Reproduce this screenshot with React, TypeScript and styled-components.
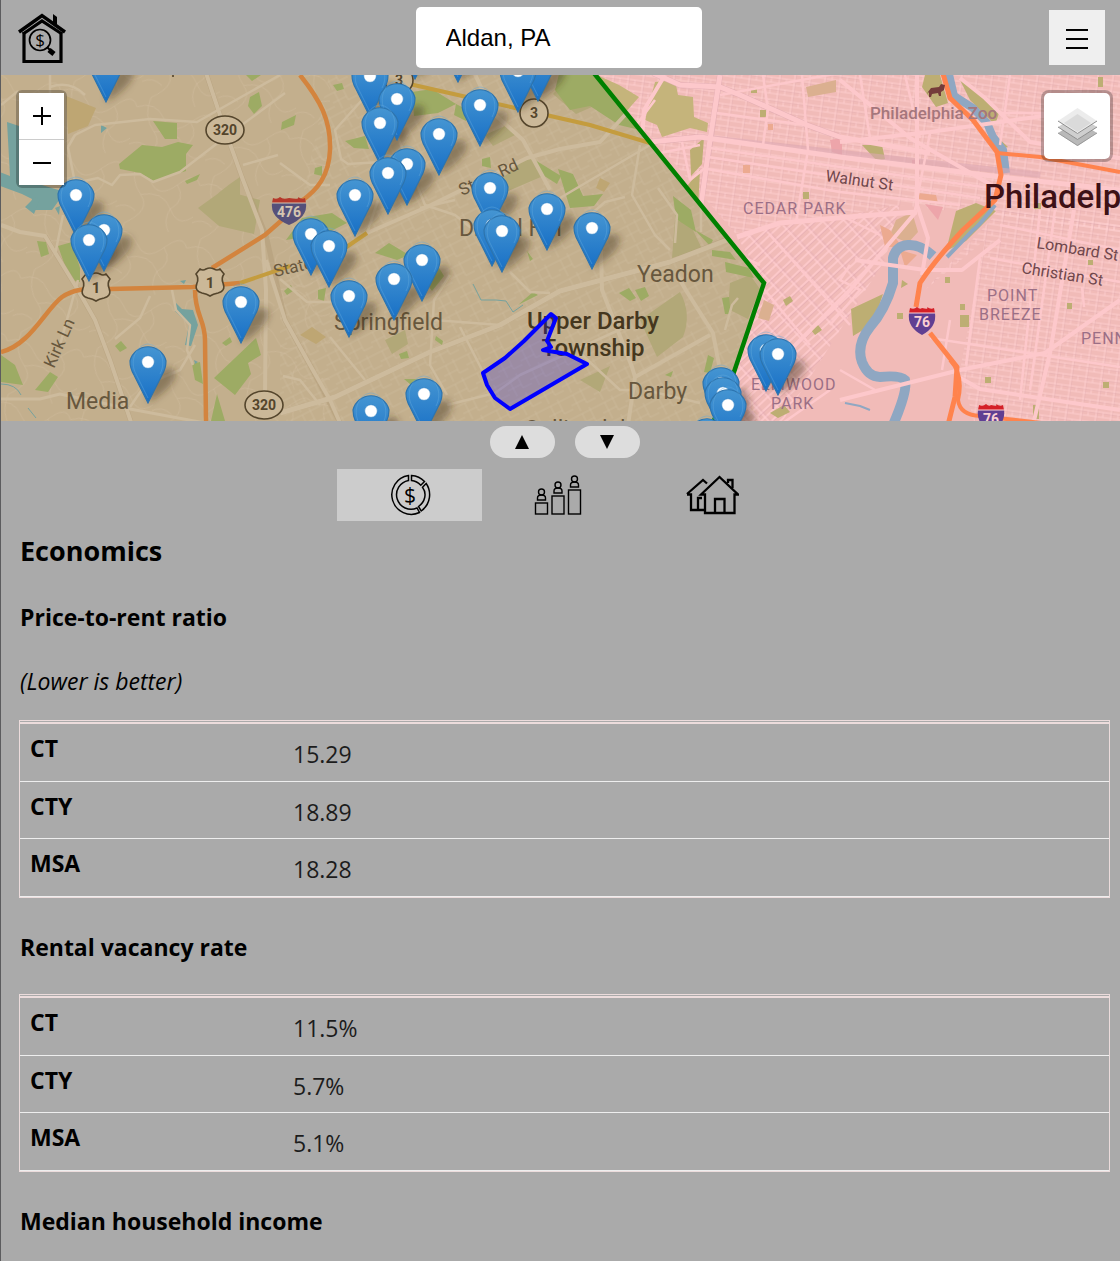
import React, { useState } from "react";
import styled, { createGlobalStyle } from "styled-components";

const GlobalStyle = createGlobalStyle`
  * { box-sizing: border-box; }
  body {
    margin: 0;
    background: #aaa;
    color: #000;
    font-family: "Segoe UI", "Open Sans", "Noto Sans", sans-serif;
  }
`;

const Page = styled.div`
  min-height: 100vh;
  border-left: 1px solid #5c5c5e;
  background: #aaa;
`;

const Header = styled.header`
  display: grid;
  grid-template-columns: 1fr auto 1fr;
  align-items: center;
  height: 75px;
  padding: 0 15px 0 11px;
`;

const LogoLink = styled.a`
  display: block;
  justify-self: start;
  width: 60px;
  height: 54px;
  color: #000;
`;

const SearchInput = styled.input`
  width: 286px;
  height: 61px;
  padding: 0 30px;
  border: 0;
  border-radius: 5px;
  background: #fff;
  color: #000;
  font: 24px "Liberation Sans", Arial, sans-serif;
`;

const MenuButton = styled.button`
  display: flex;
  align-items: center;
  justify-content: center;
  justify-self: end;
  width: 56px;
  height: 55px;
  padding: 0;
  border: 0;
  background: #efefef;
`;

const MapArea = styled.section`
  position: relative;
  height: 346px;
  overflow: hidden;
  background: #c3af8d;
`;

const MapCanvas = styled.svg`
  display: block;
  width: 100%;
  height: 100%;
  font-family: Roboto, "Liberation Sans", sans-serif;
`;

const ZoomControl = styled.div`
  position: absolute;
  top: 15px;
  left: 15px;
  display: flex;
  flex-direction: column;
  border: 3px solid rgba(0, 0, 0, 0.25);
  border-radius: 6px;
  background-clip: padding-box;
`;

const ZoomButton = styled.button`
  display: flex;
  align-items: center;
  justify-content: center;
  width: 45px;
  height: 46px;
  padding: 0;
  border: 0;
  background: #fff;
  & + & {
    border-top: 1px solid #ccc;
  }
`;

const LayersButton = styled.button`
  position: absolute;
  top: 15px;
  right: 7px;
  display: flex;
  align-items: center;
  justify-content: center;
  width: 72px;
  height: 72px;
  padding: 2px 0 0 1px;
  border: 3px solid rgba(0, 0, 0, 0.25);
  border-radius: 8px;
  background: #fff;
  background-clip: padding-box;
`;

const PanelButtons = styled.div`
  display: flex;
  justify-content: center;
  gap: 20px;
  padding: 5px 0 11px 8px;
`;

const PillButton = styled.button`
  display: flex;
  align-items: center;
  justify-content: center;
  width: 65px;
  height: 32px;
  padding: 0;
  border: 0;
  border-radius: 16px;
  background: #ddd;
`;

const Tabs = styled.div`
  display: flex;
  justify-content: center;
  gap: 6px;
`;

const Tab = styled.button<{ $active: boolean }>`
  display: flex;
  align-items: center;
  justify-content: center;
  width: 145px;
  height: 52px;
  padding: 0;
  border: 0;
  background: ${(p) => (p.$active ? "#ccc" : "transparent")};
`;

const Content = styled.main`
  padding: 13px 10px 20px 18px;
`;

const Title = styled.h2`
  margin: 0;
  padding: 0 1px;
  font-size: 27px;
  font-weight: 700;
  line-height: 34px;
`;

const SectionTitle = styled.h3`
  margin: 33px 0 31px;
  padding: 0 1px;
  font-size: 23px;
  font-weight: 700;
  line-height: 32px;
`;

const Note = styled.p`
  margin: 0 0 22px;
  padding: 0 1px;
  font-size: 23px;
  font-style: italic;
  line-height: 34px;
`;

const Table = styled.table`
  width: 100%;
  padding-top: 1px;
  border: 1px solid #ecdcdc;
  border-spacing: 0;
  border-collapse: separate;
  font-size: 23px;
  line-height: 32px;
`;

const RowLabel = styled.th`
  width: 263px;
  padding: 8px 10px 16px;
  border-bottom: 1px solid #eee;
  text-align: left;
  vertical-align: top;
`;

const RowValue = styled.td`
  padding: 14px 10px 10px;
  border-bottom: 1px solid #eee;
  color: #1c1c1c;
  vertical-align: top;
`;

const Row = styled.tr`
  height: 57px;
  &:first-child {
    height: 60px;
  }
  &:last-child {
    height: 58px;
  }
  &:first-child > * {
    border-top: 2px solid #ecdcdc;
  }
`;

/* ---------- icons ---------- */

const LogoIcon = () => (
  <svg width="60" height="54" viewBox="12 10 60 54" fill="none" stroke="#000">
    <path d="M53 22V13l4 3v10z" fill="#000" stroke="none" />
    <path d="M19 31 42 14.500 65 31" strokeWidth="3.400" />
    <path d="M24 31v29.500h37V31" strokeWidth="3.200" />
    <path d="M23 33 42 20l20 13" strokeWidth="3.200" />
    <circle cx="40" cy="39" r="10.500" strokeWidth="1.700" />
    <path d="m47 46 3 3" strokeWidth="2" />
    <path d="m49 49 5 4" strokeWidth="5" />
    <text x="40" y="45" fontSize="17" textAnchor="middle" fill="#000" stroke="none" fontFamily="Open Sans, sans-serif">$</text>
  </svg>
);

const LayersIcon = () => (
  <svg width="42" height="40" viewBox="0 0 42 40">
    <path d="M1 26 20.500 14 40 26 20.500 39z" fill="#b9b9b9" />
    <path d="M1 26 20.500 38.500 40 26" fill="none" stroke="#999" />
    <path d="M1 20 20.500 8 40 20 20.500 33z" fill="#cfcfcf" />
    <path d="M1 20 20.500 32.500 40 20" fill="none" stroke="#8d8d8d" />
    <path d="M1 14 20.500 1 40 14 20.500 27z" fill="#ececec" />
    <path d="M7 16 20.500 7 34 16 20.500 25z" fill="#dadada" />
    <path d="M1 14 20.500 26.500 40 14" fill="none" stroke="#8d8d8d" />
  </svg>
);

const EconomicsIcon = () => (
  <svg width="42" height="42" viewBox="0 0 42 42" fill="none" stroke="#000" strokeWidth="1.500">
    <path d="M19.500 1.500v5A14.500 14.500 0 1 0 28 34l2.500 4.500A19.500 19.500 0 1 1 19.500 1.500z" />
    <path d="M22.500 1.500c5 .3 9.500 2.300 13 6l-3.700 3.700c-2.500-2.600-5.600-4.200-9.300-4.700z" />
    <path d="M37.200 9.500c5.500 8 4.700 20.500-5 27.500l-2.700-4.500c6.500-4.500 8.700-13 4-19.300z" />
    <text x="21" y="28.500" fontSize="21" textAnchor="middle" fill="#000" stroke="none" fontFamily="Open Sans, sans-serif">$</text>
  </svg>
);

const PersonBar = ({ x, top }: { x: number; top: number }) => (
  <g>
    <rect x={x} y={top} width="12" height={40 - top} />
    <circle cx={x + 6} cy={top - 11} r="3" />
    <path d={`M${x + 2} ${top - 3}v-2q0-3 4-3t4 3v2z`} />
  </g>
);

const PeopleIcon = () => (
  <svg width="54" height="42" viewBox="0 0 54 42" fill="none" stroke="#000" strokeWidth="1.400">
    <PersonBar x={1.5} top={29} />
    <PersonBar x={18} top={22} />
    <PersonBar x={34.5} top={16} />
  </svg>
);

const HousesIcon = () => (
  <svg width="54" height="42" viewBox="0 0 54 42" fill="none" stroke="#000" strokeWidth="2.300">
    <path d="m2 20 16-14 4 3.500M2 20.500h4V36h13M13 36V24h4" />
    <path d="M16 20.500 34.500 3 53 20.500H49.500V39H20V20.500z" />
    <path d="M30 39V25h9.500v14M43 9V6h4.500v8" />
  </svg>
);

/* ---------- map ---------- */

const MARKERS: [number, number][] = [
  [415, 79], [458, 82], [538, 101], [106, 102], [518, 112], [370, 117],
  [397, 140], [480, 146], [380, 164], [439, 175], [407, 205], [388, 214],
  [490, 229], [76, 236], [355, 236], [547, 250], [492, 266], [592, 269],
  [104, 271], [502, 272], [311, 275], [89, 281], [329, 287], [422, 301],
  [394, 320], [349, 337], [241, 343], [766, 391], [778, 395], [148, 403],
  [721, 424], [723, 434], [424, 435], [728, 446], [371, 452], [707, 475],
];

const Marker = ({ x, y }: { x: number; y: number }) => (
  <g transform={`translate(${x} ${y})`}>
    <path
      d="M0 0-14-28C-17-33-18-37-18-42A18.500 18.500 0 0 1 18-42C18-37 17-33 14-28Z"
      fill="url(#pin)"
      stroke="#2d74ae"
      strokeWidth="1.200"
    />
    <path d="M0-5-12-29C-19-42-12-58 0-59C12-58 19-42 12-29" fill="none" stroke="#62a8dc" strokeOpacity=".45" />
    <circle cy="-41" r="6.300" fill="#fff" stroke="#2d7fc2" strokeWidth=".6" />
  </g>
);

const StateShield = ({ x, y, rx, label }: { x: number; y: number; rx: number; label: string }) => (
  <g>
    <ellipse cx={x} cy={y} rx={rx} ry="14" fill="#cbb898" stroke="#54452c" strokeWidth="1.600" />
    <text x={x} y={y + 5} fontSize="14" fontWeight="700" textAnchor="middle" fill="#54452c">{label}</text>
  </g>
);

const UsShield = ({ x, y }: { x: number; y: number }) => (
  <g transform={`translate(${x} ${y})`}>
    <path
      d="M-10-13q3 2 6 0 4-2 8 0 3 2 6 0l4 5q-3 4-1 9 3 8-5 10-5 1-8 3-3-2-8-3-8-2-5-10 2-5-1-9z"
      fill="#cbb898"
      stroke="#54452c"
      strokeWidth="1.600"
    />
    <text y="6" fontSize="15" fontWeight="700" textAnchor="middle" fill="#54452c">1</text>
  </g>
);

const Interstate = ({ x, y, w, label, muted }: { x: number; y: number; w: number; label: string; muted?: boolean }) => (
  <g transform={`translate(${x} ${y})`}>
    <path d={`M${-w}-8H${w}Q${w + 2} 6 0 14Q${-w - 2} 6 ${-w}-8z`} fill={muted ? "#55507a" : "#603f92"} />
    <path d={`M${-w}-8l1-5q4 2 7-1 3 3 ${w - 8} 1 ${w - 6} 2 ${w - 8}-1 4 3 7 1l1 5z`} fill={muted ? "#b5382a" : "#d42027"} />
    <path d={`M${-w}-8H${w}`} stroke={muted ? "#d6c6b2" : "#fbd0d2"} />
    <text y="6" fontSize="14" fontWeight="700" textAnchor="middle" fill={muted ? "#d6c6b2" : "#fbd0d2"}>{label}</text>
  </g>
);

const TAN_REGION = "M0 70H593L764 283L733 375L716 425H0Z";
const PINK_REGION = "M593 70H1125V425H716L733 375L764 283Z";

const MapDrawing = () => (
  <MapCanvas viewBox="1 75 1119 346" preserveAspectRatio="xMidYMid slice" role="img" aria-label="Map of Upper Darby and Philadelphia">
    <defs>
      <linearGradient id="pin" x1="0" y1="0" x2="0" y2="1">
        <stop offset="0" stopColor="#4595d2" />
        <stop offset="1" stopColor="#176fc6" />
      </linearGradient>
      <filter id="soft" x="-5%" y="-5%" width="110%" height="110%">
        <feGaussianBlur stdDeviation="3.500" />
      </filter>
      <pattern id="streetsTan" width="25" height="21" patternUnits="userSpaceOnUse" patternTransform="rotate(-27)">
        <path d="M0 3H25M0 12H15M6 3V21M15 0V16M15 16H25" stroke="#cfbc9e" strokeOpacity=".55" fill="none" />
      </pattern>
      <pattern id="suburbs" width="78" height="64" patternUnits="userSpaceOnUse" patternTransform="rotate(12)">
        <path d="M0 12Q18 2 29 18T56 16T78 12M12 0Q8 20 22 33T12 64M22 33Q43 24 54 41T78 44M54 41Q49 54 57 64M56 16Q68 29 54 41M0 50Q10 43 20 50" stroke="#cebb9c" strokeOpacity=".6" fill="none" />
      </pattern>
      <pattern id="streetsPink" width="15" height="11" patternUnits="userSpaceOnUse" patternTransform="rotate(8)">
        <path d="M0 2H15M0 7H15M3 0V11M10 2V7" stroke="#ffd1d2" strokeOpacity=".8" fill="none" />
        <path d="M0 3.500H15M4.500 0V11" stroke="#dfa6ad" strokeOpacity=".4" strokeWidth=".6" fill="none" />
      </pattern>
      <pattern id="streetsDiagonal" width="16" height="13" patternUnits="userSpaceOnUse" patternTransform="rotate(-43)">
        <path d="M0 2H16M0 8H16M3 0V13" stroke="#ffcdd0" strokeWidth="1.300" fill="none" />
        <path d="M0 3.500H16M5 0V13" stroke="#d9a0ae" strokeOpacity=".5" strokeWidth=".7" fill="none" />
      </pattern>
      <clipPath id="tanClip"><path d={TAN_REGION} /></clipPath>
      <clipPath id="pinkClip"><path d={PINK_REGION} /></clipPath>
    </defs>

    <g clipPath="url(#tanClip)">
      <path d={TAN_REGION} fill="#c3af8d" />
      <path d="M0 70H330V421H0Z" fill="url(#suburbs)" />
      <path d="M330 70H593L764 283L716 425H280V300Z" fill="url(#streetsTan)" />

      <g fill="#b2a878">
        <path d="M240 177v23l-40 10q20-20 40-33zM198 208l25-18 37 10-6 34-35-8z" />
        <path d="M640 320l40-28q12 22 3 45l-26 20z" />
        <path d="M675 220l15 4 12 25-30 9zM730 283l20-8 10 14-12 30-20-10z" />
        <path d="M500 180l30-25 18 19-40 17zM485 135l20-9 12 8-24 12zM385 340l20-10 3 14-16 10zM580 380l30-14-10 26z" />
        <path d="M566 80l28 26-18 8-23-20z" />
      </g>
      <path d="M66 96l30 12-8 18-20 8zM300 335l12-8 14 10-10 7zM600 178l10 5-6 9-8-4z" fill="#bea673" />
      <g fill="#9dab64">
        <path d="M119 164l23-19 20 2 16-5 15 3-7 9 0 17-32 10-14-8-20-4z" />
        <path d="M153 121l24 2v16h-12zM250 97l9-5 3 14-8 8-6-8zM246 75l15 0-9 6zM185 181l15-7-3 6-10 4z" />
        <path d="M58 246l14-4 8 26v14l-10-2zM37 241l9 1 3 12-8 3zM214 378l42-40 5 17-13 8 3 11-16 21zM217 394l8 27h-14zM192 364l8-2 3 22-8-4zM35 390l15-18 8 5-10 15zM1 355l14 10 8 20-22-3zM115 346l6-5 6 7-7 4zM222 343l8-6 2 5-6 4z" />
        <path d="M412 92l20-3 24 15-18 9-24 3zM456 104l14 7-4 10-12-6zM345 141l20-5 4 13-15-1zM282 122l14-7-2 10-13 5zM333 85l9-2 2 6-7 2zM315 168l7-2 0 10-8-2zM482 159l8-2 1 11-9-2zM535 160l26 16-4 8-19-12zM286 240l16-22 30-5 15 10-20 10z" />
        <path d="M375 253l14-10 20 12-12 5zM407 256l25 0 12 20-12 15zM318 290l8-2-2 13-6-2zM284 291l7-6 2 6-6 4zM436 336l7 5-1 4-7-5zM399 354l8-3 2 7-8 1zM404 379l14 0-7 6zM518 305l15-13 5 3-16 8zM527 251l6 8-3 2z" />
        <path d="M560 70H594L640 130 619 125 590 106 570 110 555 90z" />
        <path d="M558 169l15 5 10 22 20-2-9 12-24 2zM673 196l18 14 5 22-20-13zM695 230l18 10-3 6zM619 293l10-5 7 10-6 3zM635 290l10-3 4 9-8 5zM725 262l24 6 5 10-28-6zM712 250l18 2 6 8-24-4zM722 298l7-1 2 17-6 0zM665 375l8-4-2 6zM708 355l6 3-4 15-6-1z" />
      </g>
      <g fill="#75a29e">
        <path d="M7 122l12 4 0 52 46 14-13 18-22 0 2-11-10-5-22-8v-14l10 4z" />
        <path d="M101 125l6 3-6 5zM25 207l10-10 5 2-6 15zM55 208l5-2-1 9zM176 303l6 6 11 1 5 15-7 21-6-1 4-20-9-9-5-5zM180 281l6-1-2 4zM194 360l4 2-3 2z" />
      </g>
      <path d="M473 284l8 16h15l10 1 7 11 10-7M1 384q15 0 20 11M28 408l8 10" fill="none" stroke="#75a29e" />

      <g fill="none" stroke="#b39d7a" strokeWidth="5" strokeOpacity=".55">
        <path d="M205 70L225 130 243 180 266 235 285 320 310 365 341 425M45 236L78 290 95 320 110 360 132 425M280 413L335 397 430 352 500 325 560 291 670 262 763 225" />
      </g>
      <g fill="none" stroke="#cdbb9d" strokeWidth="4" strokeLinejoin="round">
        <path d="M205 70L225 130 243 180 262 230 266 290 265 395" />
        <path d="M266 260L285 320 310 365 330 400 341 425" />
        <path d="M1 225L20 232 45 236 78 290 95 320 110 360 132 425" />
        <path d="M1 399L40 399 60 394 130 409 205 423" strokeWidth="3" />
        <path d="M280 413L335 397 430 352 500 325 560 291 670 262 727 240 763 225" strokeWidth="5" />
        <path d="M367 233L427 207 527 158 560 149 600 142 660 77" />
        <path d="M473 70L493 113 523 140 550 190M601 250L602 290 632 367 635 377 628 425M635 377L710 335M677 275L687 292 713 333 719 365" />
      </g>
      <g fill="none" stroke="#cdbb9d" strokeWidth="2.500" strokeLinejoin="round">
        <path d="M1 105L18 91M50 75V93M50 87Q70 80 85 95M68 147L75 135 95 125 150 119 197 122 280 75M68 147L75 183 98 178 112 185 120 175 140 174 153 182 180 172 215 145 285 93M243 165L278 155" />
        <path d="M63 215L55 255M78 280L60 345M115 339L140 318 150 296M130 407L145 385 180 370 195 345M172 290L176 310 190 325 187 350 193 365" />
        <path d="M362 100L335 130 341 159 348 164 415 160M280 163L310 185 330 185M367 233L378 200M395 130L425 205 455 215 470 227 510 228M420 208L455 200" />
        <path d="M280 279L307 302 350 302M450 275L434 300 430 365 447 395M434 320L500 325M460 327L482 370M510 272L530 292 550 293M330 337L365 380M283 376L300 380 320 405M447 405L495 393 520 375 630 325" />
        <path d="M560 198L650 145M625 197L605 202 590 215M640 145L632 195 655 235 670 250M658 188L677 215 675 243M580 353L620 390 632 390M645 390L700 403M701 165V232M725 330L732 305 738 298" />
      </g>
      <g fill="none" stroke="#d3843e" strokeWidth="4.500">
        <path d="M1 352C30 345 45 310 62 297C75 288 85 289 110 289L193 287 240 283M195 290C195 315 205 320 205 340L206 421M212 268L265 235 290 213M300 75C320 100 331 120 330 150C329 175 318 190 300 202" />
        <path d="M240 283L290 266M345 248L367 233M405 83L480 100 590 125 650 143" stroke="#c49c3e" strokeWidth="4" />
      </g>
    </g>

    <g clipPath="url(#pinkClip)">
      <path d={PINK_REGION} fill="#f1bbb8" />
      <path d="M593 70H1125V235L985 215 900 205 735 233Z" fill="url(#streetsPink)" />
      <path d="M735 233L850 215 900 205 885 260 840 330 780 425H716L764 283Z" fill="url(#streetsDiagonal)" />
      <path d="M1000 210L1125 225V425H975L960 370 985 240 925 290z" fill="url(#streetsPink)" />
      <path d="M655 82L675 80 678 95 693 97 694 117 708 123 707 132 690 128 662 137 657 125 645 120z" fill="#c5b47b" />
      <path d="M597 75l22 10 20 12-14 16z" fill="#c5b47b" />
      <g fill="#bdae73">
        <path d="M925 75h15l8 28-12 4-14-20zM960 80l40 30-5 15-25-25zM990 130l18 17-10 3zM862 145h20l3 14-8 2zM690 150l14-12-2 26-11 12zM688 185l12-15-3 60zM851 309l32-15-10 30-20 12zM956 211l20-8 20 8-30 30-20 10z" />
        <path d="M751 88h6v5h-6zM760 110h6v7h-6zM803 192h6v7h-6zM760 110h6v7h-6zM1098 77h5v10h-5zM960 304h5v6h-5zM960 315h9v12h-9zM985 377h6v6h-6zM1067 303h5v6h-5zM1034 203h7v6h-7zM1088 260h5v5h-5zM1103 382h6v6h-6zM945 277h5v6h-5zM897 313h6v6h-6zM783 300l7-4 3 5-7 5zM811 330l7-5 4 5-7 5zM770 413l14-8 6 7-12 6zM1033 405h6v14h-6zM902 280l6 4-7 4z" />
      </g>
      <path d="M806 87l30-7v12l-28 5zM896 220l16-8 6 20-10 11-18-8zM764 300l10 5-5 16-11-3z" fill="#dbb090" />
      <path d="M880 225l10 5 12 17-17 0zM918 193l18 2 2 8-20-2zM743 165h7v8h-7zM768 124h5v6h-5zM900 250l17 5-12 12z" fill="#ecaa90" />
      <path d="M830 140l12-2v17l-10-3zM912 160h8v6h-8zM925 204l18 3-5 13z" fill="#eda5aa" />

      <g fill="none" stroke="#8fa7c2">
        <path d="M948 70L954 96 973 108 987 123 993 137 1003 150 1006 173" strokeWidth="8" />
        <path d="M995 205Q980 225 973 230L947 257" strokeWidth="4" />
        <path d="M933 256Q920 244 908 245T893 258L893 283Q885 310 870 327 856 345 862 362 868 377 880 377 900 375 905 380 908 390 893 425" strokeWidth="10" />
        <path d="M845 403L860 406 870 410" strokeWidth="2" />
      </g>

      <g fill="none" stroke="#dca6b0" strokeWidth="6" strokeOpacity=".6">
        <path d="M653 73L680 85 720 87 740 95 807 125 840 137M650 142L700 137 1040 175M720 75L700 210" />
      </g>
      <g fill="none" stroke="#fdc8cb" strokeWidth="5" strokeLinejoin="round">
        <path d="M653 73L680 85 720 87 740 95 807 125 840 137 930 153" />
        <path d="M650 142L700 137 840 157 1000 177 1120 190M720 75L710 140 701 205 702 225 715 232M737 237L780 223 860 216 917 212" />
        <path d="M917 75V205L928 238 922 275M665 75L644 110 642 140M840 80L910 138 1000 190M840 142L930 132 1050 115" strokeWidth="4" />
        <path d="M840 400L960 370 1045 353 1120 300M955 375L980 389 1120 410M716 425L850 290 915 213" strokeWidth="4" />
        <path d="M1050 353L1074 210M1033 425L1050 353M855 260L925 270 962 270 1000 240M960 78L985 98 1030 142 1120 158" strokeWidth="4" />
      </g>
      <g fill="none" stroke="#fdc8cb" strokeWidth="2.500">
        <path d="M763 75L768 110 763 145M720 95L840 73M717 113L805 125M710 148L840 167 990 188M708 157L840 177 980 198M707 169L840 192 960 205M802 75L808 150 796 222M860 75L870 138M905 75L920 138M1010 75L1000 145M930 133L915 210M650 155L700 145M682 142L690 180M690 180L705 168M610 160L655 100" />
        <path d="M1000 225L1120 250M990 258L1120 282M980 258L966 365M930 338L1120 367M1040 210L1020 400M1055 210L1030 390M1082 287L1084 307M1000 113H1060M850 265L840 280 860 290 830 325M840 215L880 235M740 260L810 345M770 235L850 325M840 370L875 390M735 395L760 420M780 425L830 390M950 320L942 370M700 237L760 265" />
      </g>
      <g fill="none" stroke="#ff834d" strokeWidth="5" strokeLinejoin="round">
        <path d="M942 70L950 98 973 120 997 152 1001 175 995 200 963 230Q935 260 920 283L916 307M930 333L957 367 955 397 948 425" />
        <path d="M950 360Q964 375 958 400 960 415 980 416L1050 424M997 153L1040 157 1120 172" strokeWidth="4" />
      </g>
    </g>

    <StateShield x={225} y={130} rx={19} label="320" />
    <StateShield x={264} y={405} rx={19} label="320" />
    <StateShield x={534} y={113} rx={14} label="3" />
    <StateShield x={399} y={80} rx={14} label="3" />
    <UsShield x={96} y={287} />
    <UsShield x={210} y={282} />
    <Interstate x={289} y={211} w={17} label="476" muted />
    <Interstate x={922} y={321} w={13} label="76" />
    <Interstate x={991} y={418} w={13} label="76" />

    <g fill="#67573d" fontSize="23">
      <text x="66" y="409">Media</text>
      <text x="334" y="330">Springfield</text>
      <text x="459" y="236">Drexel Hill</text>
      <text x="637" y="282">Yeadon</text>
      <text x="628" y="399">Darby</text>
      <text x="524" y="437">Collingdale</text>
    </g>
    <path d="M173 73v4" stroke="#67573d" strokeWidth="2" />
    <g fill="#67573d" fontSize="17">
      <text transform="translate(54 369) rotate(-66)">Kirk Ln</text>
      <text transform="translate(275 277) rotate(-13)">State</text>
      <text transform="translate(462 196) rotate(-25)">State Rd</text>
    </g>
    <g fill="#45371e" fontSize="24" fontWeight="500" textAnchor="middle">
      <text x="593" y="329">Upper Darby</text>
      <text x="593" y="356">Township</text>
    </g>
    <text x="870" y="119" fontSize="17" fontWeight="500" fill="#a5767c">Philadelphia Zoo</text>
    <path d="M928 92l3-4 8-1 2-3 4 1-1 5-3 2v4h-2l-1-3-6 1-1 3h-2v-5l-2 2z" fill="#753c3a" />
    <text x="984" y="208" fontSize="33" fontWeight="500" fill="#3d1116">Philadelphia</text>
    <g fill="#70474c" fontSize="16">
      <text transform="translate(825 181) rotate(8)">Walnut St</text>
      <text transform="translate(1036 248) rotate(9)">Lombard St</text>
      <text transform="translate(1021 273) rotate(9)">Christian St</text>
    </g>
    <g fill="#9b6f86" fontSize="16" letterSpacing="1">
      <text x="743" y="214">CEDAR PARK</text>
      <text x="987" y="301">POINT</text>
      <text x="979" y="320">BREEZE</text>
      <text x="1081" y="344">PENNSPORT</text>
      <text x="751" y="390">ELMWOOD</text>
      <text x="771" y="409">PARK</text>
    </g>

    <path d="M593 72L764 283 733 375 712 425" fill="none" stroke="#008000" strokeWidth="4.500" />
    <path
      d="M551 314L556 318 547 341 551 347 543 350 567 354 587 364 510 409 495 398 487 385 483 373 505 358 524 341z"
      fill="#00f"
      fillOpacity=".2"
      stroke="#00f"
      strokeWidth="4"
      strokeLinejoin="round"
    />
    <g filter="url(#soft)" fill="#3b2d1d" fillOpacity=".42">
      {MARKERS.map(([x, y]) => (
        <path key={`${x}-${y}`} d={`M${x} ${y}L${x + 4} ${y - 25}Q${x + 20} ${y - 42} ${x + 28} ${y - 31}Q${x + 28} ${y - 17} ${x} ${y}z`} />
      ))}
    </g>
    {MARKERS.map(([x, y]) => <Marker key={`${x}-${y}`} x={x} y={y} />)}
  </MapCanvas>
);

/* ---------- data ---------- */

const SECTIONS = [
  { title: "Price-to-rent ratio", note: "(Lower is better)", rows: [["CT", "15.29"], ["CTY", "18.89"], ["MSA", "18.28"]] },
  { title: "Rental vacancy rate", note: "", rows: [["CT", "11.5%"], ["CTY", "5.7%"], ["MSA", "5.1%"]] },
  { title: "Median household income", note: "", rows: [] },
];

const TABS = [
  { name: "Economics", icon: <EconomicsIcon /> },
  { name: "Demographics", icon: <PeopleIcon /> },
  { name: "Housing", icon: <HousesIcon /> },
];

export default function App() {
  const [place, setPlace] = useState("Aldan, PA");
  const [tab, setTab] = useState(0);

  return (
    <>
      <GlobalStyle />
      <Page>
        <Header>
          <LogoLink href="#" aria-label="Home"><LogoIcon /></LogoLink>
          <SearchInput aria-label="Search for a place" value={place} onChange={(e) => setPlace(e.target.value)} />
          <MenuButton aria-label="Menu">
            <svg width="22" height="22" stroke="#000" strokeWidth="2"><path d="M0 3H22M0 12H22M0 21H22" /></svg>
          </MenuButton>
        </Header>

        <MapArea>
          <MapDrawing />
          <ZoomControl>
            <ZoomButton aria-label="Zoom in">
              <svg width="18" height="18" stroke="#000" strokeWidth="2"><path d="M0 9H18M9 0V18" /></svg>
            </ZoomButton>
            <ZoomButton aria-label="Zoom out">
              <svg width="18" height="18" stroke="#000" strokeWidth="2"><path d="M0 9H18" /></svg>
            </ZoomButton>
          </ZoomControl>
          <LayersButton aria-label="Layers"><LayersIcon /></LayersButton>
        </MapArea>

        <PanelButtons>
          <PillButton aria-label="Expand panel">
            <svg width="14" height="14"><path d="M7 0 14 14H0z" /></svg>
          </PillButton>
          <PillButton aria-label="Collapse panel">
            <svg width="14" height="14"><path d="M0 0H14L7 14z" /></svg>
          </PillButton>
        </PanelButtons>

        <Tabs role="tablist">
          {TABS.map((t, i) => (
            <Tab key={t.name} role="tab" aria-label={t.name} aria-selected={i === tab} $active={i === tab} onClick={() => setTab(i)}>
              {t.icon}
            </Tab>
          ))}
        </Tabs>

        <Content>
          <Title>Economics</Title>
          {SECTIONS.map((s) => (
            <section key={s.title}>
              <SectionTitle>{s.title}</SectionTitle>
              {s.note && <Note>{s.note}</Note>}
              {s.rows.length > 0 && (
                <Table aria-label={s.title}>
                  <tbody>
                    {s.rows.map(([label, value]) => (
                      <Row key={label}>
                        <RowLabel scope="row">{label}</RowLabel>
                        <RowValue>{value}</RowValue>
                      </Row>
                    ))}
                  </tbody>
                </Table>
              )}
            </section>
          ))}
        </Content>
      </Page>
    </>
  );
}
